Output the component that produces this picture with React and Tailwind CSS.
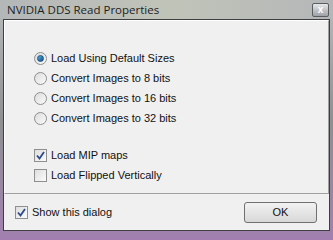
import React from "react";

function Radio({ checked, label }) {
  return (
    <div className="flex items-center h-5">
      <span className="w-[13px] h-[13px] rounded-full border border-[#8e8f8f] bg-gradient-to-br from-[#dcdcdc] to-[#fafafa] flex items-center justify-center">
        {checked && <span className="w-[7px] h-[7px] rounded-full bg-gradient-to-br from-[#5ab0e0] to-[#0c4d8a] border border-[#1c5180]" />}
      </span>
      <span className="ml-[4px]">{label}</span>
    </div>
  );
}

function Check({ checked, label }) {
  return (
    <div className="flex items-center h-5">
      <span className="w-[13px] h-[13px] border border-[#8e8f8f] bg-gradient-to-br from-[#dedede] to-[#fbfbfb] flex items-center justify-center">
        {checked && (
          <svg width="9" height="9" viewBox="0 0 9 9">
            <path d="M1 4.5 L3.5 7.5 L8 1" fill="none" stroke="#2a4a8a" strokeWidth="1.8" />
          </svg>
        )}
      </span>
      <span className="ml-[4px]">{label}</span>
    </div>
  );
}

export default function App() {
  return (
    <div
      className="w-[333px] h-[240px] overflow-hidden flex flex-col bg-gradient-to-b from-[#b9bcbd] via-[#8e9091] to-[#a27fb0] text-[11px] text-[#111]"
      style={{ fontFamily: "'Liberation Sans', Arial, sans-serif" }}
    >
      {/* title bar */}
      <div className="h-[19px] flex items-center justify-between pl-[7px] pr-[4px] bg-gradient-to-r from-[#b4b7b8] via-[#c0c4b8] to-[#b4b7b8]">
        <span className="text-[11.5px] text-[#1e1e1e]" style={{ fontFamily: "'Open Sans', 'Noto Sans', sans-serif" }}>
          NVIDIA DDS Read Properties
        </span>
        <span className="w-[17px] h-[14px] border border-[#5a5d60] rounded-[2px] bg-gradient-to-b from-[#e6e8ea] to-[#9ea2a6] flex items-center justify-center text-[10px] font-bold text-white leading-none">
          x
        </span>
      </div>

      {/* client */}
      <div className="mx-[3px] mb-[9px] flex-1 border border-[#3d3f41] bg-[#f0f0f0] flex flex-col">
        <div className="h-[174px] border border-white border-b-[#a0a0a0] border-r-[#a0a0a0] pl-[29px] pt-[27px] flex flex-col">
          <Radio checked label="Load Using Default Sizes" />
          <Radio label="Convert Images to 8 bits" />
          <Radio label="Convert Images to 16 bits" />
          <Radio label="Convert Images to 32 bits" />
          <div className="h-[17px]" />
          <Check checked label="Load MIP maps" />
          <Check label="Load Flipped Vertically" />
        </div>
        <div className="flex-1 flex items-center justify-between pl-[11px] pr-[12px] pt-[1px]">
          <Check checked label="Show this dialog" />
          <button className="w-[73px] h-[21px] rounded-[3px] border border-[#707070] bg-gradient-to-b from-[#f2f2f2] to-[#d8d8d8]">
            OK
          </button>
        </div>
      </div>
    </div>
  );
}
